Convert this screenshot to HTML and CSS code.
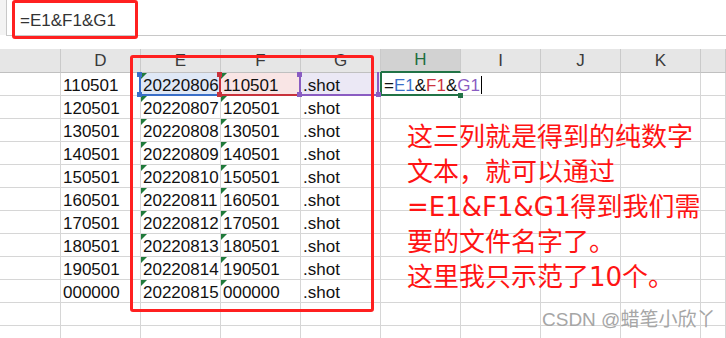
FILE: index.html
```html
<!DOCTYPE html>
<html lang="zh-CN">
<head>
<meta charset="utf-8">
<title>Excel</title>
<link rel="stylesheet" href="styles.css">
</head>
<body>
<div class="app">
  <div class="formula-bar">
    <div class="fx-side"></div>
    <div class="fx-input">=E1&amp;F1&amp;G1</div>
  </div>
  <div class="sheet">
    <div class="hd"></div><div class="hd">D</div><div class="hd">E</div><div class="hd">F</div><div class="hd">G</div><div class="hd hd-active">H</div><div class="hd">I</div><div class="hd">J</div><div class="hd">K</div><div class="hd"></div>

    <div class="c"></div><div class="c">110501</div><div class="c t fill-e">20220806</div><div class="c t fill-f">110501</div><div class="c fill-g">.shot</div><div class="c edit"><span class="edit-text">=<span class="r-e">E1</span>&amp;<span class="r-f">F1</span>&amp;<span class="r-g">G1</span><span class="caret"></span></span></div><div class="c"></div><div class="c"></div><div class="c"></div><div class="c"></div>

    <div class="c"></div><div class="c">120501</div><div class="c t">20220807</div><div class="c t">120501</div><div class="c">.shot</div><div class="c"></div><div class="c"></div><div class="c"></div><div class="c"></div><div class="c"></div>

    <div class="c"></div><div class="c">130501</div><div class="c t">20220808</div><div class="c t">130501</div><div class="c">.shot</div><div class="c"></div><div class="c"></div><div class="c"></div><div class="c"></div><div class="c"></div>

    <div class="c"></div><div class="c">140501</div><div class="c t">20220809</div><div class="c t">140501</div><div class="c">.shot</div><div class="c"></div><div class="c"></div><div class="c"></div><div class="c"></div><div class="c"></div>

    <div class="c"></div><div class="c">150501</div><div class="c t">20220810</div><div class="c t">150501</div><div class="c">.shot</div><div class="c"></div><div class="c"></div><div class="c"></div><div class="c"></div><div class="c"></div>

    <div class="c"></div><div class="c">160501</div><div class="c t">20220811</div><div class="c t">160501</div><div class="c">.shot</div><div class="c"></div><div class="c"></div><div class="c"></div><div class="c"></div><div class="c"></div>

    <div class="c"></div><div class="c">170501</div><div class="c t">20220812</div><div class="c t">170501</div><div class="c">.shot</div><div class="c"></div><div class="c"></div><div class="c"></div><div class="c"></div><div class="c"></div>

    <div class="c"></div><div class="c">180501</div><div class="c t">20220813</div><div class="c t">180501</div><div class="c">.shot</div><div class="c"></div><div class="c"></div><div class="c"></div><div class="c"></div><div class="c"></div>

    <div class="c"></div><div class="c">190501</div><div class="c t">20220814</div><div class="c t">190501</div><div class="c">.shot</div><div class="c"></div><div class="c"></div><div class="c"></div><div class="c"></div><div class="c"></div>

    <div class="c"></div><div class="c">000000</div><div class="c t">20220815</div><div class="c t">000000</div><div class="c">.shot</div><div class="c"></div><div class="c"></div><div class="c"></div><div class="c"></div><div class="c"></div>

    <div class="c"></div><div class="c"></div><div class="c"></div><div class="c"></div><div class="c"></div><div class="c"></div><div class="c"></div><div class="c"></div><div class="c"></div><div class="c"></div>

    <div class="c"></div><div class="c"></div><div class="c"></div><div class="c"></div><div class="c"></div><div class="c"></div><div class="c"></div><div class="c"></div><div class="c"></div><div class="c"></div>
  </div>

  <div class="ref ref-e"></div>
  <div class="ref ref-f"></div>
  <div class="ref ref-g"></div>
  <div class="ref ref-h"></div>
  <span class="hnd hnd-e" style="left:137px;top:72px"></span>
  <span class="hnd hnd-e" style="left:137px;top:92px"></span>
  <span class="hnd hnd-f" style="left:217px;top:72px"></span>
  <span class="hnd hnd-f" style="left:217px;top:92px"></span>
  <span class="hnd hnd-g" style="left:297px;top:72px"></span>
  <span class="hnd hnd-g" style="left:297px;top:92px"></span>
  <span class="hnd hnd-g" style="left:376px;top:92px"></span>
  <span class="hnd hnd-h" style="left:458px;top:93px"></span>

  <div class="mark mark-formula"></div>
  <div class="mark mark-cols"></div>

  <div class="note">
    <div>这三列就是得到的纯数字</div>
    <div>文本，就可以通过</div>
    <div>=E1&amp;F1&amp;G1得到我们需</div>
    <div>要的文件名字了。</div>
    <div>这里我只示范了10个。</div>
  </div>

  <div class="wm">CSDN @蜡笔小欣丫</div>
</div>
</body>
</html>
```

FILE: styles.css
```css
body {
  margin: 0;
  background: #fff;
}

.app {
  position: relative;
  width: 726px;
  height: 338px;
  overflow: hidden;
  font-family: "Liberation Sans", Arial, sans-serif;
  color: #111;
  background: #fff;
}

/* formula bar */
.formula-bar {
  display: flex;
  height: 49px;
}

.fx-side {
  width: 6px;
  height: 35px;
  background: #f3f3f3;
}

.fx-input {
  flex: 1;
  height: 36px;
  box-sizing: border-box;
  border-left: 1px solid #c8c8c8;
  border-bottom: 1px solid #c8c8c8;
  padding: 12px 0 0 13px;
  font-size: 17px;
  line-height: 1;
  color: #333;
}

/* sheet grid */
.sheet {
  display: grid;
  grid-template-columns: 61px repeat(8, 80px) 1fr;
  grid-template-rows: 24px repeat(12, 23px);
}

.hd {
  box-sizing: border-box;
  background: #e6e6e6;
  border-right: 1px solid #cacaca;
  border-bottom: 1px solid #c0c0c0;
  display: flex;
  align-items: center;
  justify-content: center;
  font-size: 17px;
  color: #3a3a3a;
}

.hd-active {
  background: #d2d2d2;
  color: #1e6e3e;
  border-bottom: 2px solid #217346;
}

.c {
  position: relative;
  box-sizing: border-box;
  border-right: 1px solid #d6d6d6;
  border-bottom: 1px solid #d6d6d6;
  display: flex;
  align-items: flex-end;
  padding: 0 0 1px 2px;
  font-size: 17px;
  line-height: 1;
  white-space: nowrap;
  color: #111;
}

.t::before {
  content: "";
  position: absolute;
  left: 0;
  top: 0;
  border-top: 6px solid #1f7a3a;
  border-right: 6px solid transparent;
}

.fill-e { background: #dfe8f6; }
.fill-f { background: #f9e5e5; }
.fill-g { background: #ebe8f5; }

.edit {
  z-index: 3;
  overflow: visible;
  border-right-color: transparent;
  padding-left: 3px;
}

.edit-text {
  background: #fff;
  padding-right: 2px;
}

.r-e { color: #3a6fc8; }
.r-f { color: #cc3340; }
.r-g { color: #8a5cc2; }

.caret {
  display: inline-block;
  width: 1px;
  height: 18px;
  background: #000;
  margin-left: 1px;
  vertical-align: -3px;
}

/* reference highlight boxes */
.ref {
  position: absolute;
  top: 72px;
  height: 24px;
  box-sizing: border-box;
  z-index: 4;
}

.ref-e {
  left: 139px;
  width: 81px;
  border-left: 2px solid #3a6fc8;
  border-bottom: 2px solid #3a6fc8;
}

.ref-f {
  left: 219px;
  width: 81px;
  border-left: 2px solid #c8323c;
  border-bottom: 2px solid #c8323c;
}

.ref-g {
  left: 299px;
  width: 80px;
  border-left: 2px solid #8a5cc2;
  border-bottom: 2px solid #8a5cc2;
  border-right: 2px solid #8a5cc2;
}

.ref-h {
  left: 380px;
  width: 81px;
  border-left: 2px solid #217346;
  border-bottom: 2px solid #217346;
}

.hnd {
  position: absolute;
  width: 5px;
  height: 5px;
  z-index: 5;
}

.hnd-e { background: #3a6fc8; }
.hnd-f { background: #c8323c; }
.hnd-g { background: #8a5cc2; }
.hnd-h { background: #217346; }

/* red annotation marks */
.mark {
  position: absolute;
  box-sizing: border-box;
  border: 3px solid #ff2020;
  border-radius: 3px;
  z-index: 6;
}

.mark-formula {
  left: 12px;
  top: 0;
  width: 126px;
  height: 39px;
}

.mark-cols {
  left: 130px;
  top: 55px;
  width: 244px;
  height: 257px;
}

.note {
  position: absolute;
  left: 407px;
  top: 120px;
  font-family: "DejaVu Sans", "Noto Sans CJK SC", sans-serif;
  font-size: 26px;
  line-height: 35px;
  color: #ff1414;
  white-space: nowrap;
  z-index: 6;
}

.wm {
  position: absolute;
  left: 542px;
  top: 310px;
  font-family: "Liberation Sans", "Noto Sans CJK SC", sans-serif;
  font-size: 19px;
  line-height: 1;
  color: #a6a6a6;
  white-space: nowrap;
  z-index: 6;
}
```
